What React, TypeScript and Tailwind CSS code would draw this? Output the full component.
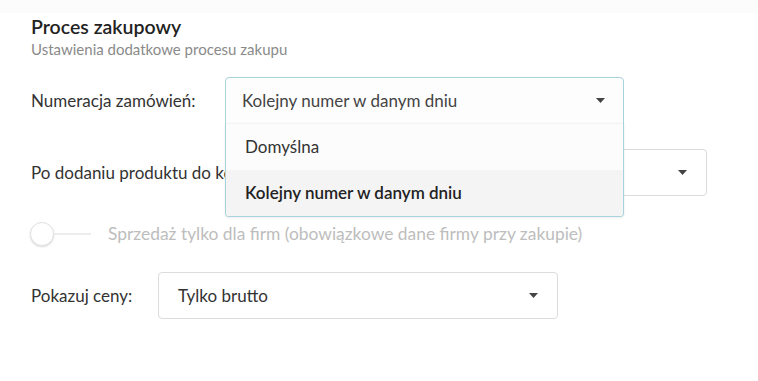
import React from 'react';

function Caret() {
  return (
    <svg width="9" height="5" viewBox="0 0 9 5" className="shrink-0">
      <path d="M0 0h9L4.5 5z" fill="#444" />
    </svg>
  );
}

function Select({ value, className = '' }: { value: string; className?: string }) {
  return (
    <div
      className={`h-[47px] flex items-center justify-between pl-[19px] pr-[19px] border border-[#dcdcdc] rounded-[4px] bg-white text-[17px] text-[#333] ${className}`}
    >
      <span>{value}</span>
      <Caret />
    </div>
  );
}

export default function App() {
  return (
    <div className="w-[758px] h-[381px] bg-white font-['Lato',sans-serif] overflow-hidden">
      <div className="h-[13px] bg-[#fcfcfc]" />
      <div className="px-[31px] pt-[2px]">
        <h2 className="text-[19.5px] font-semibold text-[#222] leading-[24px]">Proces zakupowy</h2>
        <p className="text-[15px] text-[#8a8a8a] leading-[20px]">Ustawienia dodatkowe procesu zakupu</p>

        {/* Numeracja */}
        <div className="relative z-10 flex items-center mt-[18px]">
          <span className="w-[194px] text-[17px] text-[#333]">Numeracja zamówień:</span>
          <div className="relative w-[399px]">
            <div className="h-[47px] flex items-center justify-between pl-[16px] pr-[18px] border border-[#a9d3da] rounded-t-[4px] bg-[#fdfdfd] text-[17px] text-[#444]">
              <span>Kolejny numer w danym dniu</span>
              <Caret />
            </div>
            <div className="absolute left-0 right-0 top-[46px] border border-t-0 border-[#a9d3da] rounded-b-[4px] bg-white shadow-[0_1px_3px_rgba(0,0,0,0.08)] overflow-hidden">
              <div className="h-[47px] flex items-center pl-[19px] text-[17px] text-[#333] bg-[#fcfcfc] border-t border-[#f3f3f3]">
                Domyślna
              </div>
              <div className="h-[46px] flex items-center pl-[19px] text-[17px] font-semibold text-[#222] bg-[#f4f4f4]">
                Kolejny numer w danym dniu
              </div>
            </div>
          </div>
        </div>

        {/* Po dodaniu */}
        <div className="flex items-center mt-[25px]">
          <span className="w-[277px] text-[17px] text-[#333]">Po dodaniu produktu do koszyka:</span>
          <Select value="Przejdź do koszyka" className="w-[399px]" />
        </div>

        {/* Toggle */}
        <div className="flex items-center mt-[25px] h-[26px]">
          <div className="flex items-center -ml-[1px]">
            <div className="w-[24px] h-[24px] rounded-full border border-[#e2e2e2] bg-white shadow-[0_1px_2px_rgba(0,0,0,0.15)]" />
            <div className="w-[37px] h-[2px] bg-[#ececec]" />
          </div>
          <span className="ml-[17px] text-[17.4px] text-[#bdbdbd]">
            Sprzedaż tylko dla firm (obowiązkowe dane firmy przy zakupie)
          </span>
        </div>

        {/* Ceny */}
        <div className="flex items-center mt-[25px]">
          <span className="w-[127px] text-[17px] text-[#333]">Pokazuj ceny:</span>
          <Select value="Tylko brutto" className="w-[400px]" />
        </div>
      </div>
    </div>
  );
}
